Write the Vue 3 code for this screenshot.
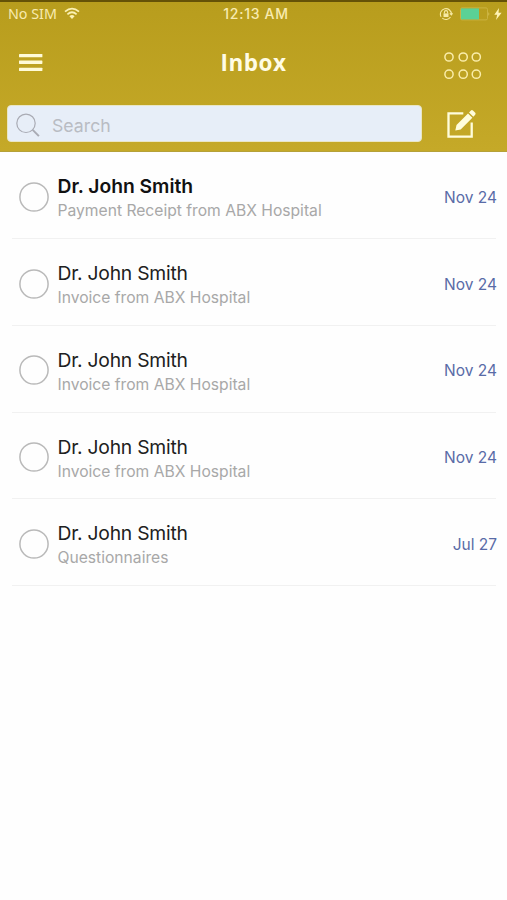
<script setup>
const messages = [
  { from: 'Dr. John Smith', subject: 'Payment Receipt from ABX Hospital', date: 'Nov 24', unread: true },
  { from: 'Dr. John Smith', subject: 'Invoice from ABX Hospital', date: 'Nov 24' },
  { from: 'Dr. John Smith', subject: 'Invoice from ABX Hospital', date: 'Nov 24' },
  { from: 'Dr. John Smith', subject: 'Invoice from ABX Hospital', date: 'Nov 24' },
  { from: 'Dr. John Smith', subject: 'Questionnaires', date: 'Jul 27' },
]
</script>

<template>
  <main class="screen">
    <header class="header">
      <div class="status">
        <div class="carrier">
          <span>No SIM</span>
          <svg class="wifi" width="16" height="13" viewBox="0 0 16 13" fill="none" stroke="#fbf1b4" stroke-width="1.7">
            <path d="M1 4.7Q8-1.5 15 4.7M3.4 7.3Q8 3.2 12.6 7.3" />
            <path d="M5.4 9.2Q8 7 10.6 9.2L8 12Z" fill="#fbf1b4" stroke="none" />
          </svg>
        </div>
        <span class="clock">12:13 AM</span>
        <div class="indicators">
          <svg width="14" height="14" viewBox="0 0 14 14" fill="none" stroke="#f6e9a4" stroke-width="1.1">
            <path d="M2.1 9.8A5.5 5.5 0 1 1 12.4 7.5M11.5 10A5.5 5.5 0 0 1 3.3 11.2M10.8 6.4 12.4 8 13.6 6.2" />
            <path d="M5.4 6.6V5.2a1.6 1.6 0 0 1 3.2 0V6.6" />
            <path d="M4.5 6.4h5v3.6h-5z" fill="#f6e9a4" stroke="none" />
          </svg>
          <svg class="battery" width="31" height="14" viewBox="0 0 31 14">
            <rect x=".5" y=".9" width="27" height="12" rx="1.5" fill="none" stroke="#cbb341" />
            <rect x="1" y="1.4" width="18" height="11" fill="#5bd196" />
            <path d="M28.5 5q1.8 2 0 4z" fill="#dfca65" />
          </svg>
          <svg class="bolt" width="8" height="12" viewBox="0 0 8 12"><path d="M5 0 .3 6.8h2.9L2 12 7.6 4.7H4.5z" fill="#fff3b5" /></svg>
        </div>
      </div>
      <div class="titlebar">
        <button class="icon-button" aria-label="Menu">
          <svg width="24" height="19" viewBox="0 0 24 19" fill="#fffbd8">
            <rect y=".9" width="23.4" height="3.4" rx=".6" /><rect y="7.5" width="23.4" height="3.4" rx=".6" /><rect y="14.7" width="23.4" height="3.4" rx=".6" />
          </svg>
        </button>
        <h1>Inbox</h1>
        <button class="icon-button" aria-label="More">
          <svg width="38" height="28" viewBox="0 0 38 28" fill="none" stroke="#faedaa" stroke-width="1.5">
            <circle cx="5" cy="5" r="4.1" /><circle cx="19.2" cy="5" r="4.1" /><circle cx="32.3" cy="5" r="4.1" />
            <circle cx="5" cy="22.2" r="4.1" /><circle cx="19.2" cy="22.2" r="4.1" /><circle cx="32.3" cy="22.2" r="4.1" />
          </svg>
        </button>
      </div>
      <div class="tools">
        <div class="search">
          <svg width="25" height="25" viewBox="0 0 25 25" fill="none" stroke="#a9abb4">
            <circle cx="10" cy="10.3" r="9.2" stroke-width="1.2" /><path d="m16.7 16.9 6.2 6.2" stroke-width="2" />
          </svg>
          <span>Search</span>
        </div>
        <button class="icon-button" aria-label="Compose">
          <svg width="29" height="30" viewBox="0 0 29 30">
            <path d="M16.3 4.3H1.5V27.6H24.7V13.5" fill="none" stroke="#fffddc" stroke-width="2.3" />
            <path d="m8.3 21.5 1.2-5.4L21 4.4l4.4 4.4-11.7 11.7z" fill="#fffddc" />
            <path d="m22 3.5 1.7-1.8q1.2-1.2 2.5 0l1.8 1.8q1.2 1.2 0 2.4L26.3 7.8z" fill="#fffddc" />
          </svg>
        </button>
      </div>
    </header>
    <ul class="messages">
      <li v-for="(message, index) in messages" :key="index" class="message" :class="{ unread: message.unread }">
        <svg class="select" width="30" height="30" viewBox="0 0 30 30"><circle cx="15" cy="15" r="14.1" fill="none" stroke="#b9b9b9" stroke-width="1.5" /></svg>
        <div class="content">
          <h2>{{ message.from }}</h2>
          <p>{{ message.subject }}</p>
        </div>
        <time>{{ message.date }}</time>
      </li>
    </ul>
  </main>
</template>

<style>
body { margin: 0; background: #fefefe; }
</style>

<style scoped>
* { box-sizing: border-box; }
.screen { width: 507px; height: 900px; overflow: hidden; background: #fefefe; font-family: Inter, "Liberation Sans", sans-serif; }
.header { height: 152px; border-top: 2px solid #655207; background: linear-gradient(#b89d1d, #c5a928); border-bottom: 1px solid #b5a139; }
.status { display: grid; grid-template-columns: 1fr auto 1fr; height: 23px; padding: 0 5px 0 8px; align-items: center; color: #f8ebb0; font-size: 14px; line-height: 23px; }
.carrier { display: flex; align-items: center; gap: 7px; font-family: "Noto Sans", sans-serif; font-size: 14.3px; }
.clock { margin: 0 -1px 0 1px; font-weight: 500; letter-spacing: .7px; }
.indicators { display: flex; align-items: center; justify-content: flex-end; }
.battery { margin-left: 7px; }
.bolt { margin-left: 3px; }
.titlebar { display: grid; grid-template-columns: 1fr auto 1fr; height: 74px; padding: 0 25px 0 19px; align-items: center; }
.titlebar .icon-button:last-child { justify-self: end; margin-top: 7px; }
h1 { margin: 2px -3px 0 3px; color: #fffce5; font: bold 22.5px/30px "Open Sans", sans-serif; letter-spacing: .5px; }
.icon-button { display: flex; width: max-content; padding: 0; border: 0; background: none; }
.tools { display: flex; align-items: center; gap: 25px; padding-left: 7px; margin-top: 6px; }
.search { display: flex; align-items: center; gap: 11px; width: 415px; height: 37px; padding-left: 8px; border: 1px solid #e9e6c5; border-radius: 4px; background: #e7eef8; color: #b9bcc3; font-size: 17.7px; }
.search svg { margin-top: 3px; }
.search span { margin-top: 4px; }
.messages { margin: 0; padding: .4px 11px 0 12px; list-style: none; }
.message { display: flex; align-items: center; height: 86.75px; border-bottom: 1px solid #f1f1f1; }
.select { margin: 3px 8.5px 0 7px; flex: none; }
.content { flex: 1; padding-top: 6px; }
h2 { margin: 0; color: #202020; font-size: 19.3px; font-weight: 400; line-height: 26px; letter-spacing: -.23px; }
.unread h2 { color: #111; font-weight: 600; letter-spacing: -.03px; }
p { margin: 0; color: #a8a8a8; font-size: 15.65px; line-height: 24px; }
time { margin: 5px -1px 0 0; color: #596ba7; font-size: 15.5px; line-height: 22px; }
</style>
